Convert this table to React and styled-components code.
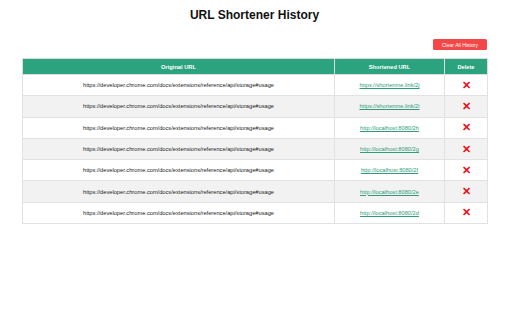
import React from "react";
import styled, { createGlobalStyle } from "styled-components";

const GlobalStyle = createGlobalStyle`
  body {
    margin: 0;
    background: #ffffff;
    font-family: "Liberation Sans", Arial, sans-serif;
  }
`;

// Page wrapper
const Page = styled.div`
  width: 465px;
  margin-left: 22px;
  padding-top: 8px;
`;

const Title = styled.h1`
  margin: 0;
  text-align: center;
  font-size: 12px;
  line-height: 14px;
  font-weight: bold;
  color: #111;
`;

const Toolbar = styled.div`
  display: flex;
  justify-content: flex-end;
  margin-top: 17px;
  margin-bottom: 8px;
`;

const ClearButton = styled.button`
  width: 54px;
  height: 11px;
  padding: 0;
  border: none;
  border-radius: 1.5px;
  background: #f44848;
  color: #fff;
  font-family: "Liberation Sans", Arial, sans-serif;
  font-size: 5.1px;
  cursor: pointer;
`;

const Table = styled.table`
  width: 465px;
  border-collapse: collapse;
  table-layout: fixed;
  font-size: 5.7px;
`;

const HeadCell = styled.th`
  height: 15px;
  padding: 0;
  background: #2ca37f;
  color: #fff;
  font-weight: bold;
  border: 1px solid #dcdcdc;
  text-align: center;
`;

const Row = styled.tr`
  background: ${(p) => (p.$alt ? "#f2f2f2" : "#ffffff")};
`;

const Cell = styled.td`
  height: 20.3px;
  padding: 0;
  border: 1px solid #e2e2e2;
  text-align: center;
  color: #222;
  white-space: nowrap;
  overflow: hidden;
`;

const ShortLink = styled.a`
  color: #2e9c7b;
  text-decoration: underline;
`;

const DeleteIcon = styled.span`
  color: #e8121a;
  font-size: 11px;
  font-weight: bold;
  line-height: 1;
  cursor: pointer;
`;

const original =
  "https://developer.chrome.com/docs/extensions/reference/api/storage#usage";

const history = [
  "https://shortenme.link/2j",
  "https://shortenme.link/2i",
  "http://localhost:8080/2h",
  "http://localhost:8080/2g",
  "http://localhost:8080/2f",
  "http://localhost:8080/2e",
  "http://localhost:8080/2d",
];

const App = () => {
  return (
    <>
      <GlobalStyle />
      <Page>
        <Title>URL Shortener History</Title>
        <Toolbar>
          <ClearButton>Clear All History</ClearButton>
        </Toolbar>
        <Table>
          <colgroup>
            <col style={{ width: 312 }} />
            <col style={{ width: 110 }} />
            <col style={{ width: 43 }} />
          </colgroup>
          <thead>
            <tr>
              <HeadCell>Original URL</HeadCell>
              <HeadCell>Shortened URL</HeadCell>
              <HeadCell>Delete</HeadCell>
            </tr>
          </thead>
          <tbody>
            {history.map((short, i) => (
              <Row key={short} $alt={i % 2 === 1}>
                <Cell>{original}</Cell>
                <Cell>
                  <ShortLink href="#">{short}</ShortLink>
                </Cell>
                <Cell>
                  <DeleteIcon>✕</DeleteIcon>
                </Cell>
              </Row>
            ))}
          </tbody>
        </Table>
      </Page>
    </>
  );
};

export default App;
